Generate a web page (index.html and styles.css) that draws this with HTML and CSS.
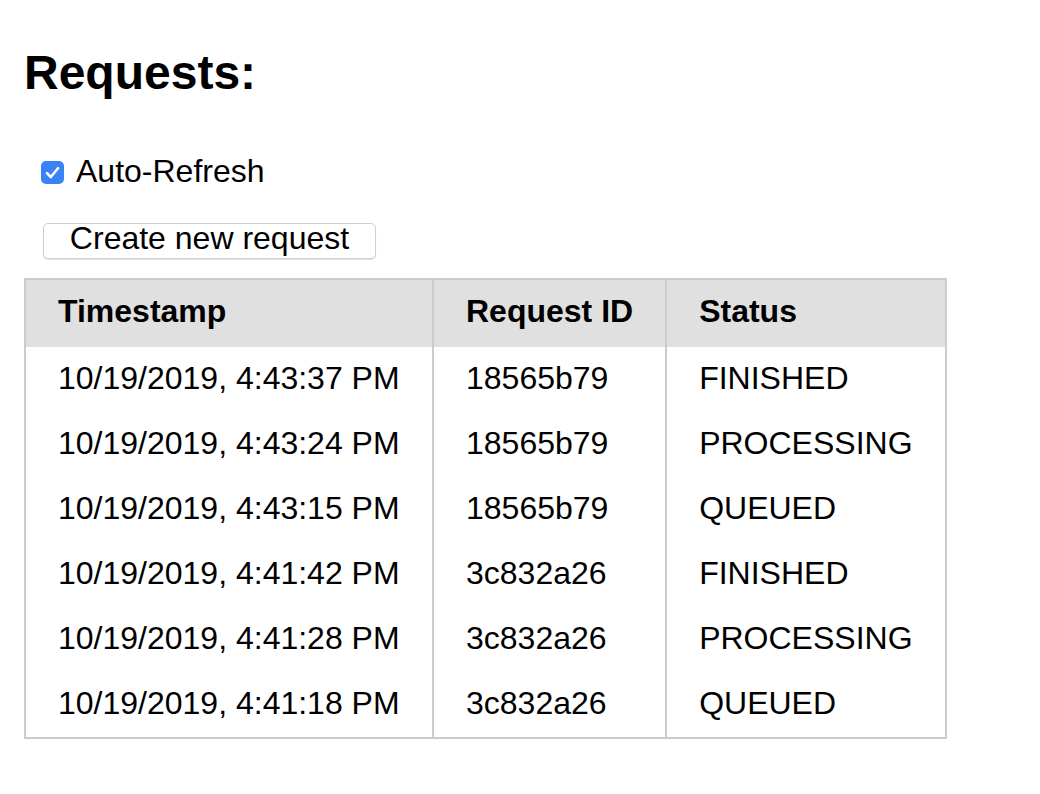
FILE: index.html
```html
<!DOCTYPE html>
<html lang="en">
<head>
<meta charset="utf-8">
<title>Requests</title>
<link rel="stylesheet" href="styles.css">
</head>
<body>
<div class="page">
  <h1 class="title">Requests:</h1>
  <label class="auto">
    <span class="check" role="checkbox" aria-checked="true">
      <svg viewBox="0 0 23 23" width="23" height="23" aria-hidden="true">
        <rect x="0" y="0" width="23" height="23" rx="5" ry="5" fill="#3a83f6"/>
        <path d="M6 12.2 L9.8 16 L17 7.2" fill="none" stroke="#ffffff" stroke-width="2.6" stroke-linecap="round" stroke-linejoin="round"/>
      </svg>
    </span>
    <span class="auto-text">Auto-Refresh</span>
  </label>
  <div class="actions">
    <button class="btn" type="button">Create new request</button>
  </div>
  <table class="requests">
    <thead>
      <tr>
        <th class="c1">Timestamp</th>
        <th class="c2">Request ID</th>
        <th class="c3">Status</th>
      </tr>
    </thead>
    <tbody>
      <tr><td>10/19/2019, 4:43:37 PM</td><td>18565b79</td><td>FINISHED</td></tr>
      <tr><td>10/19/2019, 4:43:24 PM</td><td>18565b79</td><td>PROCESSING</td></tr>
      <tr><td>10/19/2019, 4:43:15 PM</td><td>18565b79</td><td>QUEUED</td></tr>
      <tr><td>10/19/2019, 4:41:42 PM</td><td>3c832a26</td><td>FINISHED</td></tr>
      <tr><td>10/19/2019, 4:41:28 PM</td><td>3c832a26</td><td>PROCESSING</td></tr>
      <tr><td>10/19/2019, 4:41:18 PM</td><td>3c832a26</td><td>QUEUED</td></tr>
    </tbody>
  </table>
</div>
</body>
</html>
```

FILE: styles.css
```css
html, body {
  margin: 0;
  padding: 0;
  background: #ffffff;
}

body {
  font-family: "Liberation Sans", Arial, Helvetica, sans-serif;
  color: #000000;
}

.page {
  padding: 45px 0 0 24px;
}

.title {
  margin: 0;
  font-size: 48px;
  font-weight: bold;
  line-height: normal;
}

.auto {
  display: flex;
  align-items: center;
  margin: 53px 0 0 17px;
  font-size: 32px;
  line-height: 36px;
  height: 36px;
}

.check {
  display: block;
  width: 23px;
  height: 23px;
  margin-top: 2px;
  margin-right: 12px;
}

.check svg {
  display: block;
}

.actions {
  margin: 34px 0 0 19px;
}

.btn {
  display: block;
  box-sizing: border-box;
  width: 333px;
  height: 36px;
  padding: 0 0 6px;
  margin: 0;
  font-family: "Liberation Sans", Arial, Helvetica, sans-serif;
  font-size: 32px;
  line-height: 28px;
  color: #000000;
  text-align: center;
  background: #ffffff;
  border: 1px solid #cfcfcf;
  border-radius: 5px;
  box-shadow: 0 1px 1px rgba(0, 0, 0, 0.12);
}

.requests {
  margin-top: 19px;
  border-collapse: collapse;
  border: 2px solid #cccccc;
  font-size: 32px;
  table-layout: fixed;
}

.requests th,
.requests td {
  box-sizing: border-box;
  text-align: left;
  padding: 0 32px 3px;
  white-space: nowrap;
  border-left: 2px solid #cccccc;
  border-right: 2px solid #cccccc;
  vertical-align: middle;
  line-height: normal;
}

.requests th {
  height: 68px;
  padding-bottom: 5px;
  background: #e0e0e0;
  font-weight: bold;
}

.requests td {
  height: 65px;
}

.requests tbody tr:last-child td {
  height: 66px;
}

.requests .c1 {
  width: 408px;
}

.requests .c2 {
  width: 233px;
}

.requests .c3 {
  width: 277px;
}
```
